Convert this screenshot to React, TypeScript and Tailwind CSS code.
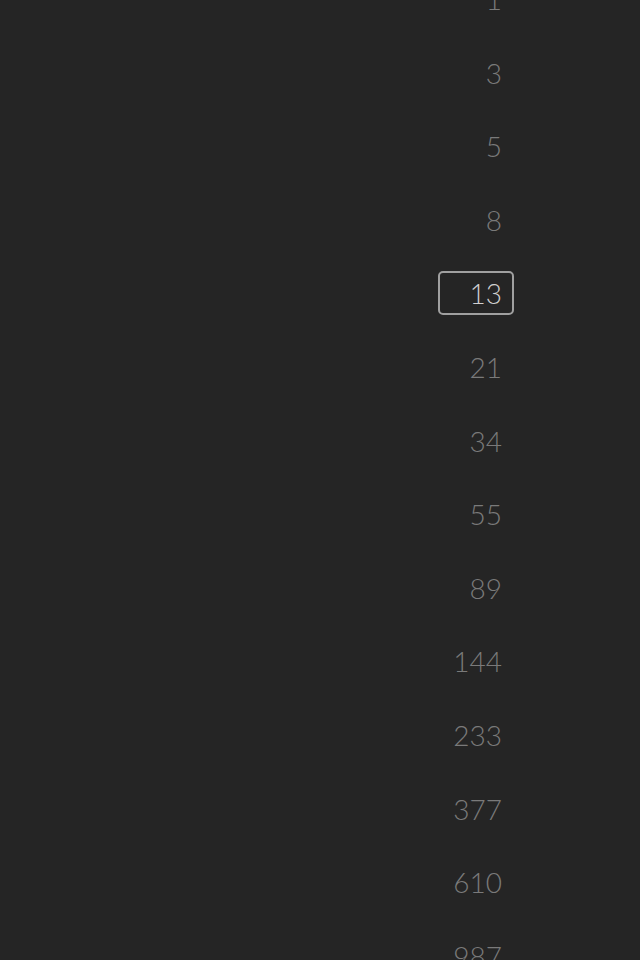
import React from "react";

const nums = [1, 3, 5, 8, 13, 21, 34, 55, 89, 144, 233, 377, 610, 987];

export default function App() {
  return (
    <div className="w-[640px] h-[960px] overflow-hidden bg-[#252525]" style={{ fontFamily: "Lato, 'Open Sans', sans-serif" }}>
      <div className="flex flex-col items-start pl-[438px] mt-[-37.8px]">
        {nums.map((n) => (
          <div key={n} className="h-[73.6px] flex items-center">
            <div
              className={
                n === 13
                  ? "w-[76px] h-[44px] flex items-center justify-end pr-[10px] rounded-[5px] border-2 border-[#a0a0a0] text-[#d0d0d0] text-[28px] font-light leading-none"
                  : "w-[76px] h-[44px] flex items-center justify-end pr-[12px] text-[#7a7a7a] text-[28px] font-light leading-none"
              }
            >
              {n}
            </div>
          </div>
        ))}
      </div>
    </div>
  );
}
